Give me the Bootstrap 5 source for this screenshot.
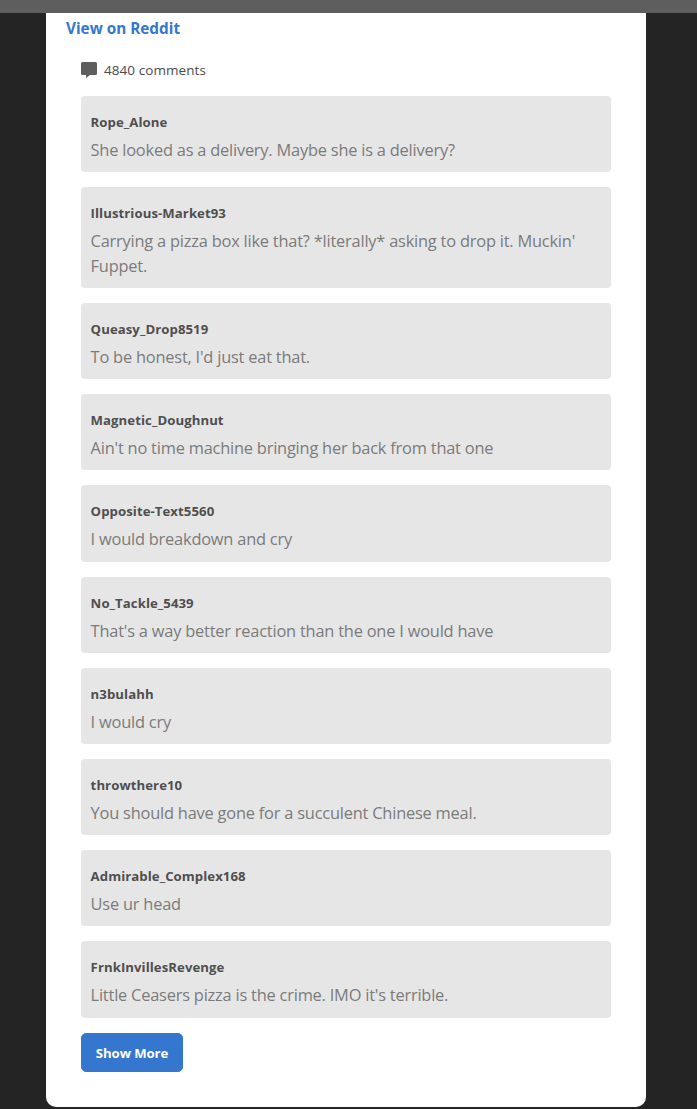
<!DOCTYPE html>
<html lang="en">
<head>
<meta charset="utf-8">
<meta name="viewport" content="width=device-width, initial-scale=1">
<title>Comments</title>
<link href="https://cdn.jsdelivr.net/npm/bootstrap@5.3.0/dist/css/bootstrap.min.css" rel="stylesheet">
<style>
  body { background: #242424; font-family: "Segoe UI", "Open Sans", "Noto Sans", sans-serif; height: 1109px; overflow: hidden; }
  .topbar { height: 13px; background: #5e5e5e; }
  .panel { width: 600px; height: 1094px; margin-left: 46px; border-radius: 0 0 10px 10px; padding: 0 35px; }
  .source-link { display: block; margin-left: -15px; padding-top: 3px; font-size: 15.3px; line-height: 24px; font-weight: 700; color: #3576cf; }
  .tally { height: 24px; margin: 18px 0 13.68px; font-size: 13.5px; color: #4b4b4b; gap: 7px; letter-spacing: .07px; }
  .comment { background: #e6e6e6; border-radius: 4px; padding: 16px 10px 10.2px 9.6px; margin-bottom: 15px; }
  .author { font-size: 13.2px; line-height: 20px; font-weight: 700; color: #4f4f4f; margin-bottom: 5px; letter-spacing: .06px; }
  .words { font-size: 16.4px; line-height: 25px; color: #7b7b7b; letter-spacing: -.21px; }
  .more { --bs-btn-bg: #3576cf; --bs-btn-border-color: #3576cf; width: 102px; height: 39px; border-radius: 5px; font-size: 13.2px; font-weight: 700; letter-spacing: -.1px; padding: 3px 0 0; }
  .fit { white-space: nowrap; }
</style>
</head>
<body>
<div class="topbar"></div>
<main class="panel bg-white">
  <a class="source-link text-decoration-none" href="#"><span class="fit">View on Reddit</span></a>
  <div class="tally d-flex align-items-center">
    <svg width="16" height="16" viewBox="0 0 16 16" fill="#5e5e5e"><path d="M1.500 0h13A1.500 1.500 0 0 1 16 1.500v10a1.500 1.500 0 0 1-1.500 1.500H9l-4 3v-3H1.500A1.500 1.500 0 0 1 0 11.500v-10A1.500 1.500 0 0 1 1.500 0z"/></svg>
    <span class="fit">4840 comments</span>
  </div>
  <section>
    <article class="comment"><div class="author"><span class="fit">Rope_Alone</span></div><div class="words"><span class="fit">She looked as a delivery. Maybe she is a delivery?</span></div></article>
    <article class="comment"><div class="author"><span class="fit">Illustrious-Market93</span></div><div class="words"><span class="fit">Carrying a pizza box like that? *literally* asking to drop it. Muckin'</span><br><span class="fit">Fuppet.</span></div></article>
    <article class="comment"><div class="author"><span class="fit">Queasy_Drop8519</span></div><div class="words"><span class="fit">To be honest, I'd just eat that.</span></div></article>
    <article class="comment"><div class="author"><span class="fit">Magnetic_Doughnut</span></div><div class="words"><span class="fit">Ain't no time machine bringing her back from that one</span></div></article>
    <article class="comment"><div class="author"><span class="fit">Opposite-Text5560</span></div><div class="words"><span class="fit">I would breakdown and cry</span></div></article>
    <article class="comment"><div class="author"><span class="fit">No_Tackle_5439</span></div><div class="words"><span class="fit">That's a way better reaction than the one I would have</span></div></article>
    <article class="comment"><div class="author"><span class="fit">n3bulahh</span></div><div class="words"><span class="fit">I would cry</span></div></article>
    <article class="comment"><div class="author"><span class="fit">throwthere10</span></div><div class="words"><span class="fit">You should have gone for a succulent Chinese meal.</span></div></article>
    <article class="comment"><div class="author"><span class="fit">Admirable_Complex168</span></div><div class="words"><span class="fit">Use ur head</span></div></article>
    <article class="comment"><div class="author"><span class="fit">FrnkInvillesRevenge</span></div><div class="words"><span class="fit">Little Ceasers pizza is the crime. IMO it's terrible.</span></div></article>
  </section>
  <button class="btn btn-primary more" type="button"><span class="fit">Show More</span></button>
</main>
<script src="https://cdn.jsdelivr.net/npm/bootstrap@5.3.0/dist/js/bootstrap.bundle.min.js"></script>
</body>
</html>
